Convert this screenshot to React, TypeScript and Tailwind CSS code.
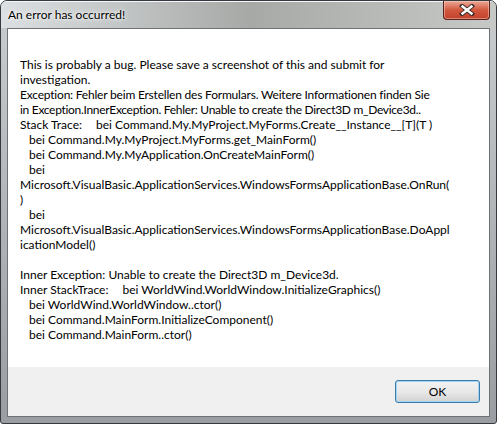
const lines: { text: string; indent?: boolean; label?: string; tight?: string }[] = [
  { text: "This is probably a bug. Please save a screenshot of this and submit for" },
  { text: "investigation." },
  { text: "Exception: Fehler beim Erstellen des Formulars. Weitere Informationen finden Sie", tight: "tracking-[-0.2px]" },
  { text: "in Exception.InnerException. Fehler: Unable to create the Direct3D m_Device3d..", tight: "tracking-[-0.3px]" },
  { label: "Stack Trace:", text: "bei Command.My.MyProject.MyForms.Create__Instance__[T](T )" },
  { indent: true, text: "bei Command.My.MyProject.MyForms.get_MainForm()" },
  { indent: true, text: "bei Command.My.MyApplication.OnCreateMainForm()" },
  { indent: true, text: "bei" },
  { text: "Microsoft.VisualBasic.ApplicationServices.WindowsFormsApplicationBase.OnRun(" },
  { text: ")" },
  { indent: true, text: "bei" },
  { text: "Microsoft.VisualBasic.ApplicationServices.WindowsFormsApplicationBase.DoAppl" },
  { text: "icationModel()" },
  { text: "" },
  { text: "Inner Exception: Unable to create the Direct3D m_Device3d." },
  { label: "Inner StackTrace:", text: "bei WorldWind.WorldWindow.InitializeGraphics()" },
  { indent: true, text: "bei WorldWind.WorldWindow..ctor()" },
  { indent: true, text: "bei Command.MainForm.InitializeComponent()" },
  { indent: true, text: "bei Command.MainForm..ctor()" },
];

function CloseButton() {
  return (
    <div className="absolute top-0 right-[6px] w-[47px] h-[19px] rounded-b-[4px] border border-t-0 border-[#5a2218] bg-gradient-to-b from-[#e9a898] via-[#d3573f] to-[#c2422c] flex items-center justify-center shadow-[inset_0_0_0_1px_rgba(255,220,210,0.45)]">
      <svg width="16" height="12" viewBox="0 0 16 12">
        <path d="M3 2 L13 10 M13 2 L3 10" stroke="#3b2a26" strokeWidth="4.2" strokeLinecap="square" />
        <path d="M3.5 2.5 L12.5 9.5 M12.5 2.5 L3.5 9.5" stroke="#ffffff" strokeWidth="2.4" strokeLinecap="square" />
      </svg>
    </div>
  );
}

export default function App() {
  return (
    <div className="w-[497px] h-[424px] bg-white" style={{ fontFamily: 'Lato, "Liberation Sans", sans-serif' }}>
      <div className="relative w-full h-full flex flex-col rounded-t-[7px] rounded-b-[3px] border border-[#343a3f] bg-gradient-to-b from-[#c9cdd0] to-[#9a9ea2] overflow-hidden">
        {/* title bar */}
        <div className="h-[27px] flex items-center pl-[7px] bg-gradient-to-r from-[#dce0e2] via-[#a7a9a7] to-[#c7c9c6] border-t border-[#f4f6f7]">
          <span className="text-[12px] text-black [text-shadow:0_0_6px_#ffffff,0_0_3px_#ffffff]">
            An error has occurred!
          </span>
        </div>
        <CloseButton />

        {/* client area */}
        <div className="flex-1 mx-[6px] border border-[#6e7275] flex flex-col bg-white">
          <div className="flex-1 pl-[12px] pt-[28px] text-[12px] leading-[15px] text-black">
            {lines.map((l, i) => (
              <div key={i} className={`h-[15px] whitespace-pre ${l.indent ? "pl-[9px]" : ""} ${l.tight ?? ""}`}>
                {l.label ? (
                  <>
                    <span>{l.label}</span>
                    <span className="ml-[14px]">{l.text}</span>
                  </>
                ) : (
                  l.text
                )}
              </div>
            ))}
          </div>
          <div className="h-[49px] bg-[#f0f0f0] flex justify-end pt-[13px] pr-[9px]">
            <button className="w-[85px] h-[23px] rounded-[3px] border border-[#3d7bad] bg-gradient-to-b from-[#f2f2f2] via-[#e9e9e9] to-[#d2d2d2] shadow-[inset_0_0_0_1px_#9fd4f3] text-[12px] text-black">
              OK
            </button>
          </div>
        </div>
        <div className="h-[6px]" />
      </div>
    </div>
  );
}
